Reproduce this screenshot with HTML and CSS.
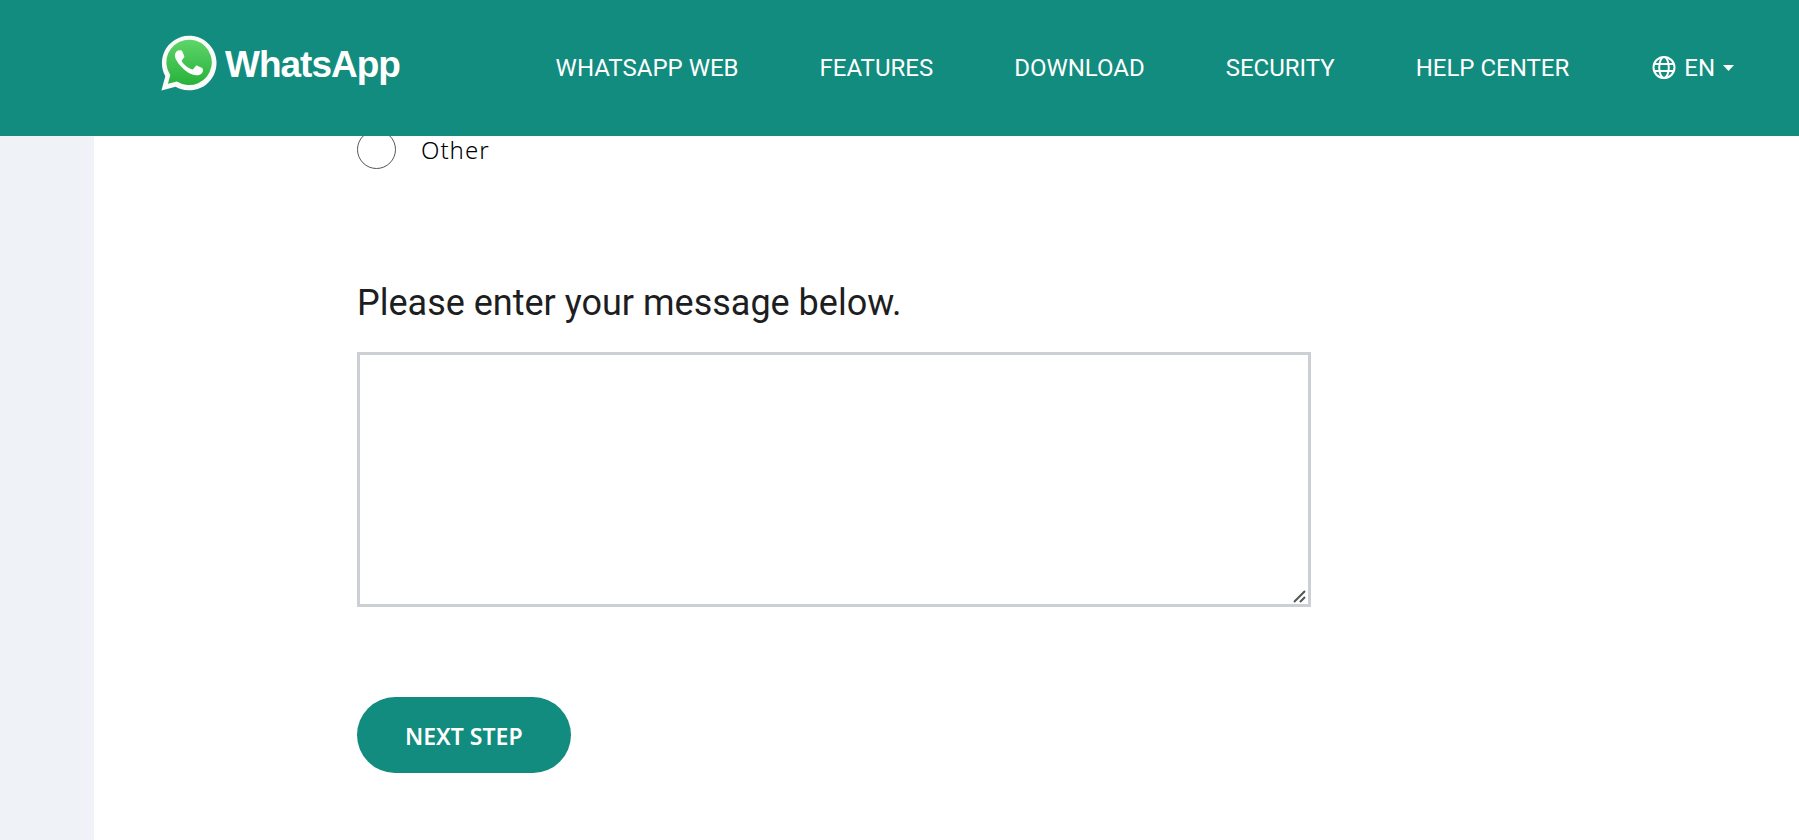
FILE: index.html
```html
<!DOCTYPE html>
<html lang="en">
<head>
<meta charset="utf-8">
<meta name="viewport" content="width=device-width, initial-scale=1">
<title>WhatsApp Contact</title>
<link rel="stylesheet" href="styles.css">
</head>
<body>
<header class="site-header">
  <a class="brand" href="#">
    <svg class="brand-icon" viewBox="0 0 56 56" aria-hidden="true">
      <defs>
        <linearGradient id="bubble" x1="0" y1="0" x2="0" y2="1">
          <stop offset="0" stop-color="#5fd568"/>
          <stop offset="1" stop-color="#27b23b"/>
        </linearGradient>
      </defs>
      <path fill="#fafafa" d="M0.4 55.4 4.3 41.2A27.3 27.3 0 1 1 14.6 51.7Z"/>
      <path fill="url(#bubble)" d="M6.9 48.8 9.3 40.1A22.7 22.7 0 1 1 15.9 46.5Z"/>
      <path fill="#fff" d="M16.1 15.9C17.4 15 19.7 15.1 20.6 15.6 21.3 16 22.9 20.3 23.3 21.4 23.6 22.4 20.8 24.9 20.7 25.7 20.6 26.5 24.2 31.7 30.6 34.2 31.5 34.6 32 34.400 32.5 33.8L34.8 31C35.4 30.3 36 30.6 36.8 30.9L41.2 33C42.2 33.5 42.2 35.9 41.4 37.4 40.3 39.4 37.3 40.4 35.2 40.3 31.7 40.1 25.4 37.7 20.4 31.8 16.3 27 14.7 24.3 14.1 21.9 13.5 19.5 14.5 17.1 16.1 15.9Z"/>
    </svg>
    <span class="brand-name">WhatsApp</span>
  </a>
  <nav class="nav">
    <a href="#">WHATSAPP WEB</a>
    <a href="#">FEATURES</a>
    <a href="#">DOWNLOAD</a>
    <a href="#">SECURITY</a>
    <a href="#">HELP CENTER</a>
    <button class="language" type="button">
      <svg class="globe" viewBox="0 0 24 24" fill="none" stroke="#fff" stroke-width="2" aria-hidden="true">
        <circle cx="12" cy="11.500" r="10.5"/>
        <ellipse cx="12" cy="11.500" rx="4.8" ry="10.5"/>
        <path d="M2 8h20M2 15h20"/>
      </svg>
      EN
      <svg class="caret" viewBox="0 0 11 6" fill="#fff" aria-hidden="true"><path d="M0 0h11L5.500 6z"/></svg>
    </button>
  </nav>
</header>
<main class="page">
  <form class="contact">
    <label class="option"><input class="radio" type="radio" name="topic">Other</label>
    <label class="question" for="message">Please enter your message below.</label>
    <textarea class="message" id="message"></textarea>
    <button class="next" type="button">NEXT STEP</button>
  </form>
</main>
</body>
</html>
```
FILE: styles.css
```css
* {
  box-sizing: border-box;
}

body {
  margin: 0;
  background: #eff3f8;
  color: #1c1e21;
  font-family: Roboto, sans-serif;
}

.site-header {
  position: fixed;
  inset: 0 0 auto;
  z-index: 1;
  display: flex;
  align-items: center;
  justify-content: space-between;
  padding: 35px 65px 45px 161px;
  background: #128c7e;
  color: #fff;
}

.brand {
  display: flex;
  align-items: center;
  gap: 8px;
  color: inherit;
  text-decoration: none;
}

.brand-icon {
  width: 56px;
  height: 56px;
}

.brand-name {
  padding-top: 4px;
  font: bold 37px/52px "Liberation Sans", Arial, sans-serif;
  letter-spacing: -1px;
}

.nav {
  display: flex;
  align-items: center;
  gap: 81px;
  padding-top: 10px;
  font-size: 24px;
  line-height: 32px;
  white-space: nowrap;
}

.nav a {
  color: inherit;
  text-decoration: none;
}

.language {
  display: flex;
  align-items: center;
  gap: 8px;
  margin-left: 2px;
  padding: 0;
  border: 0;
  background: none;
  color: inherit;
  font: inherit;
}

.globe {
  width: 24px;
  height: 24px;
}

.caret {
  width: 11px;
  height: 6px;
}

.page {
  min-height: 100vh;
  margin-left: 94px;
  padding: 130px 488px 64px 263px;
  background: #fff;
}

.contact {
  display: flex;
  flex-direction: column;
  align-items: flex-start;
}

.option {
  display: flex;
  align-items: center;
  gap: 25px;
  color: #000;
  font: 300 24px/39px "Noto Sans", sans-serif;
  letter-spacing: 1px;
}

.radio {
  width: 39px;
  height: 39px;
  margin: 0;
  border: 1px solid #555;
  border-radius: 50%;
  background: #fff;
  appearance: none;
}

.question {
  margin: 109px 0 24px;
  font-size: 36px;
  line-height: 50px;
}

.message {
  width: 100%;
  height: 255px;
  padding: 16px;
  border: 3px solid #ccd0d5;
  background: #fff;
  color: inherit;
  font: 24px/32px Roboto, sans-serif;
  resize: vertical;
}

.message::-webkit-scrollbar {
  width: 16px;
  height: 16px;
}

.message::-webkit-resizer {
  background: url("data:image/svg+xml,%3Csvg xmlns='http://www.w3.org/2000/svg' width='16' height='16'%3E%3Cpath d='M2 14 13 3M8 14l5-5' stroke='%23555' stroke-width='2'/%3E%3C/svg%3E") no-repeat right bottom;
}

.next {
  margin-top: 90px;
  padding: 23px 48px 21px;
  border: 0;
  border-radius: 38px;
  background: #128c7e;
  color: #fff;
  font: 600 23px/32px "Noto Sans", sans-serif;
}
```
